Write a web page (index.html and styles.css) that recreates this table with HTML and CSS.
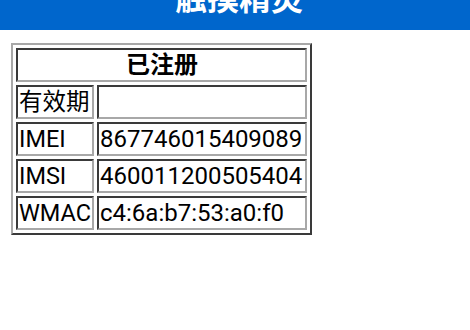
FILE: index.html
```html
<!DOCTYPE html>
<html>
<head>
<meta charset="utf-8">
<link rel="stylesheet" href="styles.css">
</head>
<body>
<header class="topbar"><div class="title">触摸精灵</div></header>
<main class="content">
<table class="info">
<colgroup><col class="kcol"><col class="vcol"></colgroup>
<tr><th class="head" colspan="2">已注册</th></tr>
<tr><td class="cell key">有效期</td><td class="cell val"></td></tr>
<tr><td class="cell key">IMEI</td><td class="cell val">867746015409089</td></tr>
<tr><td class="cell key">IMSI</td><td class="cell val">460011200505404</td></tr>
<tr><td class="cell key">WMAC</td><td class="cell val">c4:6a:b7:53:a0:f0</td></tr>
</table>
</main>
</body>
</html>
```

FILE: styles.css
```css
html, body {
  margin: 0;
  padding: 0;
  background: #ffffff;
}
body {
  font-family: Roboto, "Noto Sans CJK SC", sans-serif;
  color: #000;
}
.topbar {
  height: 30px;
  background: #0066cc;
  overflow: hidden;
  display: flex;
  justify-content: center;
  align-items: flex-start;
}
.title {
  color: #ffffff;
  font-family: "Noto Sans CJK SC", sans-serif;
  font-weight: bold;
  font-size: 32px;
  line-height: 32px;
  margin-top: -20px;
  padding-left: 8px;
}
.content {
  padding: 13px 0 0 11px;
}
.info {
  border-width: 2px;
  border-style: solid;
  border-color: #a8a8a8 #3a3a3a #3a3a3a #a8a8a8;
  border-spacing: 3px 3.5px;
  font-size: 24px;
  table-layout: fixed;
  width: 300px;
}
.kcol {
  width: 78px;
}
.vcol {
  width: 210px;
}
.head, .cell {
  border-width: 2px;
  border-style: solid;
  border-color: #3a3a3a #a8a8a8 #a8a8a8 #3a3a3a;
  padding: 1px 0 1px 1px;
  height: 34px;
  box-sizing: border-box;
  line-height: 28px;
  white-space: nowrap;
  overflow: visible;
}
.head {
  font-weight: bold;
  text-align: center;
}
.cell {
  text-align: left;
}
.key {
  font-size: 23.5px;
}
```
